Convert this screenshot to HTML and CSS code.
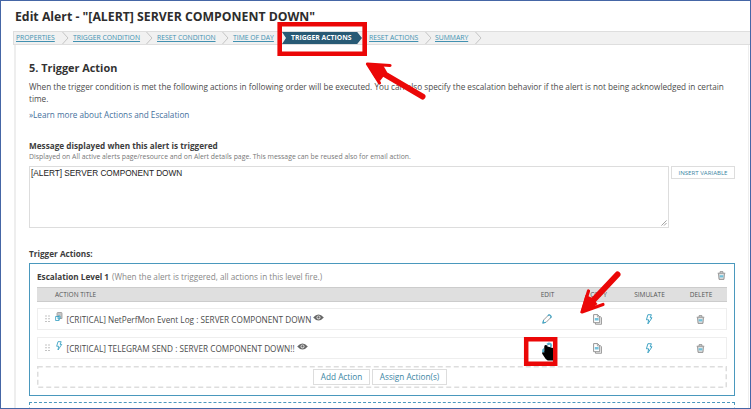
FILE: index.html
```html
<!DOCTYPE html>
<html lang="en">
<head>
<meta charset="utf-8">
<title>Edit Alert</title>
<link rel="stylesheet" href="styles.css">
</head>
<body>
<svg class="defs" aria-hidden="true">
  <symbol id="copy" viewBox="0 0 9 11"><path d="M2.500 3v7.300h6V3.800L7.300 2.500z" fill="#eee" stroke="#8a8a8a" stroke-width=".8"/><path d="M.6.600h4l2.100 2.100v6H.6z" fill="#fff" stroke="#8a8a8a" stroke-width=".9"/><path d="M4.400.600v2.300h2.300" fill="none" stroke="#8a8a8a" stroke-width=".7"/><path d="M1.800 4h3.800v2.500H1.800z" fill="#76c3dd"/></symbol>
  <symbol id="bolt" viewBox="0 0 8 12"><path d="M2.800.8h3.800L5.300 4.100h2L2.800 10.800l.8-4.500H1.200z" fill="#fff" stroke="#319dc0" stroke-width="1"/></symbol>
  <symbol id="trash" viewBox="0 0 10 10"><path d="M1.800 3l.5 6.300h5.400L8.200 3M.8 2.500h8.400M3.400 2V.8h3.200V2" fill="#e4e4e4" stroke="#858585" stroke-width="1"/><path d="M3 4.700h4v2.400H3z" fill="#6fc1dc"/></symbol>
  <symbol id="pencil" viewBox="0 0 10 10"><path d="M1 9l.6-3L6.300 1.300q.8-.7 1.700.1l.6.600q.8.900.1 1.700L4 8.400z" fill="#fff" stroke="#8b8b8b" stroke-width=".9"/><path d="M5.800 1.800l.8-.8q.7-.5 1.500.2l.7.700q.7.900.1 1.600l-.7.700M1.600 6L.9 9l3-.7" fill="none" stroke="#43a9ca" stroke-width="1.100"/></symbol>
  <symbol id="eye" viewBox="0 0 11 7"><path d="M.2 3.500Q5.500-2.700 10.800 3.500 5.500 9.700.2 3.500z" fill="#666"/><circle cx="5.500" cy="3.400" r="2" fill="#ddd"/><circle cx="5.500" cy="3.400" r="1.100" fill="#666"/></symbol>
  <symbol id="grip" viewBox="0 0 5 8"><path d="M.5.500h1v1h-1zM3.500.500h1v1h-1zM.5 3.300h1v1h-1zM3.500 3.300h1v1h-1zM.5 6.100h1v1h-1zM3.500 6.100h1v1h-1z" fill="#888"/></symbol>
  <symbol id="log" viewBox="0 0 8 10"><path d="M2 1.200Q2 .5 3 .5h3.500Q7 .5 7 1.500V6.500H2z" fill="#c6c6c6" stroke="#999" stroke-width=".8"/><path d="M.6 4.500h3.500v4H.6zM3 4h2v3H3z" fill="#fff" stroke="#319dc0" stroke-width=".8"/></symbol>
</svg>
<div class="window">
  <h1>Edit Alert - "[ALERT] SERVER COMPONENT DOWN"</h1>
  <nav class="steps">
    <a class="s1">PROPERTIES</a><svg class="chev" viewBox="0 0 7 12"><path d="M.5 0l5.500 6-5.500 6"/></svg>
    <a class="s2">TRIGGER CONDITION</a><svg class="chev" viewBox="0 0 7 12"><path d="M.5 0l5.500 6-5.500 6"/></svg>
    <a class="s3">RESET CONDITION</a><svg class="chev" viewBox="0 0 7 12"><path d="M.5 0l5.500 6-5.500 6"/></svg>
    <a class="s4">TIME OF DAY</a>
    <b class="current"><span>TRIGGER ACTIONS</span></b>
    <a class="s5">RESET ACTIONS</a><svg class="chev" viewBox="0 0 7 12"><path d="M.5 0l5.500 6-5.500 6"/></svg>
    <a class="s6">SUMMARY</a><svg class="chev" viewBox="0 0 7 12"><path d="M.5 0l5.500 6-5.500 6"/></svg>
  </nav>
  <main>
    <h2>5. Trigger Action</h2>
    <p class="intro">When the trigger condition is met the following actions in following order will be executed. You can also specify the escalation behavior if the alert is not being acknowledged in certain<br>time.</p>
    <a class="learn">»Learn more about Actions and Escalation</a>
    <h3>Message displayed when this alert is triggered</h3>
    <p class="hint">Displayed on All active alerts page/resource and on Alert details page. This message can be reused also for email action.</p>
    <div class="message">
      <div class="textarea"><span>[ALERT] SERVER COMPONENT DOWN</span><svg viewBox="0 0 7 7"><path d="M.5 6.500l6-6M3.500 6.500l3-3" stroke="#777" stroke-width=".8"/></svg></div>
      <div class="button insert">INSERT VARIABLE</div>
    </div>
    <h3 class="actions-label">Trigger Actions:</h3>
    <section class="level">
      <div class="level-head"><b>Escalation Level 1</b><span>(When the alert is triggered, all actions in this level fire.)</span><svg class="trash"><use href="#trash"/></svg></div>
      <div class="grid head"><span class="name">ACTION TITLE</span><span>EDIT</span><span>COPY</span><span>SIMULATE</span><span>DELETE</span></div>
      <div class="grid row">
        <div class="name"><svg class="grip"><use href="#grip"/></svg><svg class="log"><use href="#log"/></svg><span>[CRITICAL] NetPerfMon Event Log : SERVER COMPONENT DOWN</span><svg class="eye"><use href="#eye"/></svg></div>
        <svg class="pencil"><use href="#pencil"/></svg><svg class="copy"><use href="#copy"/></svg><svg class="bolt"><use href="#bolt"/></svg><svg class="trash"><use href="#trash"/></svg>
      </div>
      <div class="grid row">
        <div class="name"><svg class="grip"><use href="#grip"/></svg><svg class="log"><use href="#bolt"/></svg><span>[CRITICAL] TELEGRAM SEND : SERVER COMPONENT DOWN!!</span><svg class="eye"><use href="#eye"/></svg></div>
        <svg class="pencil"><use href="#pencil"/></svg><svg class="copy"><use href="#copy"/></svg><svg class="bolt"><use href="#bolt"/></svg><svg class="trash"><use href="#trash"/></svg>
      </div>
      <div class="add"><svg class="dash"><rect x=".75" y=".75" width="688.500" height="20.500"/></svg><div class="button add-action">Add Action</div><div class="button assign">Assign Action(s)</div></div>
    </section>
    <section class="next"></section>
  </main>
</div>
<svg class="marks" viewBox="0 0 751 409">
  <g fill="none" stroke="#eb0707">
    <path d="M279.700 24.200h85v29.500h-85z" stroke-width="4.600"/>
    <path d="M526.200 339.200h29v24.600h-29z" stroke-width="4.500"/>
    <g stroke-linecap="round" stroke-linejoin="round"><path d="M374 68L422.500 96.500" stroke-width="6"/><path d="M390 65.500L367.500 64 379.500 83" stroke-width="3.200"/>
    <path d="M617.500 274.500L586 308" stroke-width="6"/><path d="M588.500 291L582 312 603 304.500" stroke-width="3.200"/></g>
  </g>
  <path d="M366 63l17 2 4 7-7 9-5-3z" fill="#eb0707"/>
  <path d="M580.500 313l5-18 7 3 5 6-5 4z" fill="#eb0707"/>
  <path d="M545.500 345q-1.200 0-1.200 1.500v6l-1.800-.2q-1 .7.200 2.200l3 4.500 2 1.500H553v-12.500l-5.500-1.500-.5-1q-.4-.5-1.500-.5z" fill="#000"/>
  <path d="M546.800 344.300l2-1.200 2 .5.800 1.700-1.300 1.600" fill="none" stroke="#5bb4d1" stroke-width="1.200"/>
  <path d="M543 352l-.4-2.200 1-1.300" fill="none" stroke="#5bb4d1" stroke-width="1"/>
</svg>
</body>
</html>
```

FILE: styles.css
```css
* { box-sizing: border-box; }
body { margin: 0; background: #fff; font-family: "Open Sans", sans-serif; color: #4c4c4c; overflow: hidden; }
h1, h2, h3, p { margin: 0; white-space: nowrap; }
svg { display: block; }
.defs { position: absolute; width: 0; height: 0; }
.window { width: 751px; height: 409px; border: 1px solid #4566a6; padding-left: 13px; overflow: hidden; }
h1 { height: 31px; padding: 6px 0 0 1px; font-size: 12.280px; line-height: 20px; color: #2d2d2d; }
.steps { display: flex; align-items: center; height: 12px; background: #f1f1f1; outline: 1px solid #dedede; font-size: 6.800px; line-height: 12px; white-space: nowrap; }
.steps a { color: #4291b1; text-decoration: underline; flex: none; }
.s1 { width: 48px; padding-left: 2px; }
.s2 { width: 77px; padding-left: 4px; }
.s3 { width: 69px; padding-left: 4px; }
.s4 { width: 53px; padding-left: 4px; }
.s5 { width: 56px; }
.s6 { width: 43px; padding-left: 3px; }
.chev { width: 7px; height: 12px; flex: none; fill: none; stroke: #c4c4c4; }
.current { flex: none; width: 80px; height: 12px; padding-left: 9px; margin-right: 7px; color: #fff; background: #285a75; clip-path: polygon(0 0, 94% 0, 100% 50%, 94% 100%, 0 100%, 5% 50%); }
main { width: 735px; height: 364px; margin-top: 1px; border: solid #eee; border-width: 0 1px 0 2px; padding-left: 13px; overflow: hidden; }
h2 { height: 36px; padding-top: 13px; font-size: 10.900px; line-height: 20px; color: #333; }
.intro { height: 27px; font-size: 8.200px; line-height: 12px; }
.learn { display: block; height: 32px; font-size: 8.200px; line-height: 13px; color: #45709d; }
h3 { height: 11px; font-size: 8.200px; line-height: 11px; color: #3d3d3d; }
.hint { height: 15px; font-size: 6.870px; line-height: 11px; color: #777; }
.message { display: flex; gap: 2px; height: 82px; }
.textarea { position: relative; width: 640px; height: 62px; border: 1px solid #ddd; padding: 2px 1px; font: 8.250px/10px "Liberation Sans", sans-serif; color: #222; }
.textarea svg { position: absolute; right: 1px; bottom: 1px; width: 6px; height: 6px; }
.button { border: 1px solid #ddd; background: #fff; color: #3a85a3; text-align: center; white-space: nowrap; }
.insert { width: 64px; height: 13px; font-size: 6.100px; line-height: 11px; }
.level { width: 706px; height: 133px; margin-top: 4px; border: 1px solid #4a98bd; padding: 7px; }
.level-head { display: flex; height: 16px; font-size: 8.180px; line-height: 11px; gap: 3px; white-space: nowrap; color: #888; }
.level-head b { color: #3d3d3d; }
.level-head .trash { margin: 0 1px 0 auto; }
.grid { display: grid; grid-template-columns: 485px 51px 51px 51px 52px; align-items: center; justify-items: center; width: 690px; }
.grid .name { justify-self: start; }
.head { height: 15px; background: #dfdfdf; border: solid #ccc; border-width: 1px 0; font-size: 6.500px; color: #555; margin-bottom: 6px; }
.head .name { padding-left: 18px; }
.row { grid-template-columns: 483px 51px 51px 51px 52px; height: 22px; border: 1px solid #eee; margin-bottom: 7px; font-size: 8.220px; }
.row .name { display: flex; align-items: center; height: 20px; padding-left: 7px; white-space: nowrap; }
.grip { width: 5px; height: 8px; margin-right: 5px; }
.log { width: 8px; height: 10px; margin: 0 3.500px 4px 0; }
.eye { width: 11px; height: 7px; margin: 0 0 4px 2px; }
.pencil { width: 10px; height: 10px; }
.copy { width: 9px; height: 11px; }
.bolt { width: 8px; height: 11px; }
.trash { width: 9px; height: 9px; }
.add { position: relative; display: flex; justify-content: center; align-items: center; gap: 2px; width: 690px; height: 22px; padding-right: 4px; font-size: 8.200px; line-height: 13px; }
.add .button { position: relative; height: 16px; }
.dash { position: absolute; inset: 0; width: 690px; height: 22px; fill: none; stroke: #ddd; stroke-width: 1.500; stroke-dasharray: 5 3; }
.add-action { width: 57px; }
.assign { width: 75px; }
.next { width: 706px; height: 20px; margin-top: 6px; border: 1px dashed #4a98bd; }
.marks { position: absolute; left: 0; top: 0; width: 751px; height: 409px; }
```
